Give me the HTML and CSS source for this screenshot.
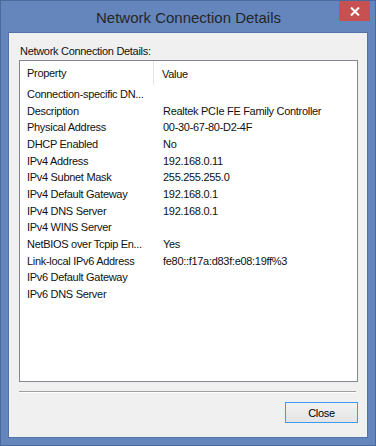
FILE: index.html
```html
<!DOCTYPE html>
<html lang="en">
<head>
    <meta charset="UTF-8">
    <title>Network Connection Details</title>
    <link rel="stylesheet" href="styles.css">
</head>
<body>
    <div class="window">
        <div class="titlebar">
            <span class="title">Network Connection Details</span>
            <div class="close-btn">
                <svg width="10" height="9" viewBox="0 0 10 9">
                    <path d="M1 0.5 L9 8.5 M9 0.5 L1 8.5" stroke="#fff" stroke-width="2"/>
                </svg>
            </div>
        </div>
        <div class="client">
            <div class="caption">Network Connection Details:</div>
            <div class="listbox">
                <div class="list-header">
                    <div class="col-prop">Property</div>
                    <div class="col-val">Value</div>
                </div>
                <div class="rows">
                    <div class="row"><div class="col-prop">Connection-specific DN...</div><div class="col-val"></div></div>
                    <div class="row"><div class="col-prop">Description</div><div class="col-val">Realtek PCIe FE Family Controller</div></div>
                    <div class="row"><div class="col-prop">Physical Address</div><div class="col-val">00-30-67-80-D2-4F</div></div>
                    <div class="row"><div class="col-prop">DHCP Enabled</div><div class="col-val">No</div></div>
                    <div class="row"><div class="col-prop">IPv4 Address</div><div class="col-val">192.168.0.11</div></div>
                    <div class="row"><div class="col-prop">IPv4 Subnet Mask</div><div class="col-val">255.255.255.0</div></div>
                    <div class="row"><div class="col-prop">IPv4 Default Gateway</div><div class="col-val">192.168.0.1</div></div>
                    <div class="row"><div class="col-prop">IPv4 DNS Server</div><div class="col-val">192.168.0.1</div></div>
                    <div class="row"><div class="col-prop">IPv4 WINS Server</div><div class="col-val"></div></div>
                    <div class="row"><div class="col-prop">NetBIOS over Tcpip En...</div><div class="col-val">Yes</div></div>
                    <div class="row"><div class="col-prop">Link-local IPv6 Address</div><div class="col-val">fe80::f17a:d83f:e08:19ff%3</div></div>
                    <div class="row"><div class="col-prop">IPv6 Default Gateway</div><div class="col-val"></div></div>
                    <div class="row"><div class="col-prop">IPv6 DNS Server</div><div class="col-val"></div></div>
                </div>
            </div>
            <div class="separator"></div>
            <div class="actions">
                <button class="btn">Close</button>
            </div>
        </div>
    </div>
</body>
</html>
```

FILE: styles.css
```css
html, body {
    margin: 0;
    padding: 0;
}
body {
    font-family: "Liberation Sans", Arial, sans-serif;
    font-size: 11px;
    letter-spacing: -0.3px;
    color: #111;
    background: #6586bd;
}
.window {
    box-sizing: border-box;
    width: 376px;
    height: 446px;
    background: #6586bd;
    border: 1px solid #4b6a9c;
    padding: 0 7px 7px 7px;
    display: flex;
    flex-direction: column;
}
.titlebar {
    position: relative;
    height: 31px;
    display: flex;
    align-items: center;
    justify-content: center;
}
.title {
    font-size: 15px;
    letter-spacing: 0;
    color: #262626;
    margin-top: 1px;
    margin-left: 1px;
}
.close-btn {
    position: absolute;
    top: 0;
    right: -2px;
    width: 31px;
    height: 20px;
    background: #c75050;
    display: flex;
    align-items: center;
    justify-content: center;
}
.client {
    flex: 1;
    background: #f0f0f0;
    border: 1px solid #5273a8;
    padding: 10px 9px 0 10px;
    display: flex;
    flex-direction: column;
}
.caption {
    line-height: 16px;
    height: 16px;
    margin-bottom: 1px;
    padding-left: 1px;
}
.listbox {
    box-sizing: border-box;
    height: 322px;
    width: 339px;
    background: #fff;
    border: 1px solid #828790;
}
.list-header {
    display: flex;
    height: 25px;
    align-items: center;
}
.list-header .col-prop {
    border-right: 1px solid #e5e5e5;
    height: 24px;
    line-height: 24px;
    margin-top: -1px;
}
.list-header .col-val {
    line-height: 24px;
}
.col-prop {
    box-sizing: border-box;
    width: 134px;
    padding-left: 7px;
    white-space: nowrap;
    overflow: hidden;
}
.col-val {
    padding-left: 8px;
    white-space: nowrap;
}
.row {
    display: flex;
    height: 16.67px;
    line-height: 16.67px;
}
.row .col-prop {
    width: 135px;
}
.separator {
    margin-top: 9px;
    width: 337px;
    height: 1px;
    background: #a0a0a0;
    border-bottom: 1px solid #fff;
}
.actions {
    display: flex;
    width: 339px;
    justify-content: flex-end;
    margin-top: 9px;
}
.btn {
    box-sizing: border-box;
    width: 73px;
    height: 21px;
    margin: 0;
    padding: 0;
    font-family: "Liberation Sans", Arial, sans-serif;
    font-size: 11px;
    letter-spacing: -0.3px;
    color: #000;
    border: 1px solid #3c9bf0;
    background: linear-gradient(#f2f2f2, #e4e4e4);
}
```
